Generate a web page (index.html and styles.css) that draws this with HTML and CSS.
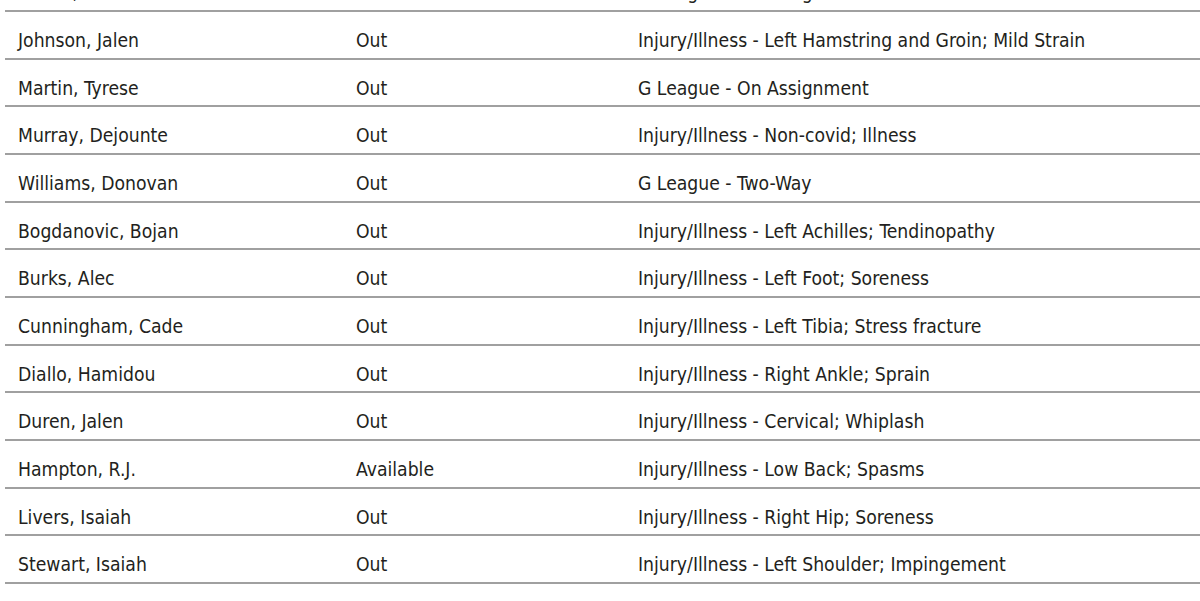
FILE: index.html
```html
<!DOCTYPE html>
<html>
<head>
<meta charset="utf-8">
<link rel="stylesheet" href="styles.css">
</head>
<body>
<div class="report">
  <div class="row"><div class="cell">Bufkin, Kobe</div><div class="cell">Out</div><div class="cell">G League - On Assignment</div></div>
  <div class="row"><div class="cell">Johnson, Jalen</div><div class="cell">Out</div><div class="cell">Injury/Illness - Left Hamstring and Groin; Mild Strain</div></div>
  <div class="row"><div class="cell">Martin, Tyrese</div><div class="cell">Out</div><div class="cell">G League - On Assignment</div></div>
  <div class="row"><div class="cell">Murray, Dejounte</div><div class="cell">Out</div><div class="cell">Injury/Illness - Non-covid; Illness</div></div>
  <div class="row"><div class="cell">Williams, Donovan</div><div class="cell">Out</div><div class="cell">G League - Two-Way</div></div>
  <div class="row"><div class="cell">Bogdanovic, Bojan</div><div class="cell">Out</div><div class="cell">Injury/Illness - Left Achilles; Tendinopathy</div></div>
  <div class="row"><div class="cell">Burks, Alec</div><div class="cell">Out</div><div class="cell">Injury/Illness - Left Foot; Soreness</div></div>
  <div class="row"><div class="cell">Cunningham, Cade</div><div class="cell">Out</div><div class="cell">Injury/Illness - Left Tibia; Stress fracture</div></div>
  <div class="row"><div class="cell">Diallo, Hamidou</div><div class="cell">Out</div><div class="cell">Injury/Illness - Right Ankle; Sprain</div></div>
  <div class="row"><div class="cell">Duren, Jalen</div><div class="cell">Out</div><div class="cell">Injury/Illness - Cervical; Whiplash</div></div>
  <div class="row"><div class="cell">Hampton, R.J.</div><div class="cell">Available</div><div class="cell">Injury/Illness - Low Back; Spasms</div></div>
  <div class="row"><div class="cell">Livers, Isaiah</div><div class="cell">Out</div><div class="cell">Injury/Illness - Right Hip; Soreness</div></div>
  <div class="row"><div class="cell">Stewart, Isaiah</div><div class="cell">Out</div><div class="cell">Injury/Illness - Left Shoulder; Impingement</div></div>
</div>
</body>
</html>
```
FILE: styles.css
```css
html, body {
  margin: 0;
  padding: 0;
  background: #ffffff;
  overflow: hidden;
}
.report {
  margin-top: -35.67px;
  margin-left: 5px;
  font-family: "DejaVu Sans Condensed", "Liberation Sans", sans-serif;
  font-size: 19.2px;
  color: #231f20;
}
.row {
  display: grid;
  grid-template-columns: 338px 282px 1fr;
  box-sizing: border-box;
  height: 47.67px;
  padding: 17px 0 0 13px;
  line-height: 24px;
  border-bottom: 2px solid #a0a0a0;
  white-space: nowrap;
}
```
